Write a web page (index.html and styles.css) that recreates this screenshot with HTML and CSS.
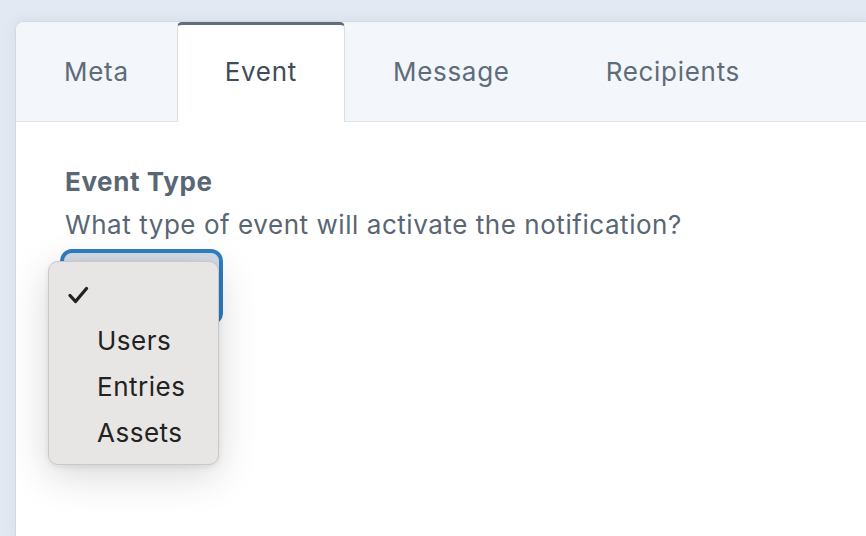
FILE: index.html
```html
<!DOCTYPE html>
<html>
<head>
<meta charset="utf-8">
<link rel="stylesheet" href="styles.css">
</head>
<body>
<div class="card">
  <div class="tabs">
    <div class="tab">Meta</div>
    <div class="tab active">Event</div>
    <div class="tab">Message</div>
    <div class="tab">Recipients</div>
  </div>
  <div class="content">
    <div class="label">Event Type</div>
    <div class="help">What type of event will activate the notification?</div>
    <div class="select-wrap">
      <div class="select"></div>
      <div class="menu">
        <div class="opt checked"><svg class="check" width="22" height="18" viewBox="0 0 22 18"><path d="M3 9.5 L8.5 15.5 L19.5 2.5" fill="none" stroke="#222" stroke-width="3.3" stroke-linecap="round" stroke-linejoin="round"/></svg></div>
        <div class="opt">Users</div>
        <div class="opt">Entries</div>
        <div class="opt">Assets</div>
      </div>
    </div>
  </div>
</div>
</body>
</html>
```
FILE: styles.css
```css
html, body {
  margin: 0;
  padding: 0;
  background: #e3e9f3;
  width: 866px;
  height: 536px;
  overflow: hidden;
  font-family: "Inter", "Noto Sans", sans-serif;
}
body {
  padding: 21px 0 0 15px;
  box-sizing: border-box;
}
.card {
  background: #ffffff;
  border: 1px solid #d1d9e3;
  border-right: none;
  border-bottom: none;
  border-top-left-radius: 9px;
  width: 851px;
  height: 515px;
  overflow: hidden;
  box-shadow: 0 0 12px rgba(150, 165, 190, 0.2);
}
.tabs {
  display: flex;
  height: 99px;
  background: #f3f6fb;
  border-bottom: 1px solid #dde3ea;
}
.tab {
  padding: 0 48px;
  display: flex;
  align-items: center;
  font-size: 26px;
  color: #5f6c7a;
  letter-spacing: 0.7px;
}
.tab.active {
  background: #ffffff;
  color: #3f4c59;
  border-top: 3px solid #606d7b;
  border-left: 1px solid #d8dfe8;
  border-right: 1px solid #d8dfe8;
  border-radius: 5px 5px 0 0;
  margin-bottom: -1px;
  padding: 0 47px 4px 47px;
  height: 100px;
  box-sizing: border-box;
}
.content {
  padding: 43px 49px;
}
.label {
  font-size: 26px;
  font-weight: 700;
  color: #596673;
  line-height: 34px;
  letter-spacing: 0.6px;
}
.help {
  font-size: 26px;
  color: #596673;
  line-height: 34px;
  margin-top: 9px;
  letter-spacing: 0.55px;
}
.select-wrap {
  position: relative;
  margin-top: 7px;
  margin-left: -5px;
}
.select {
  width: 155px;
  height: 68px;
  background: #d3dbe6;
  border: 4px solid #2f7dc0;
  border-radius: 12px;
}
.menu {
  position: absolute;
  left: -12px;
  top: 12px;
  width: 171px;
  background: #e7e6e4;
  border: 1px solid #c9c8c6;
  border-radius: 10px;
  box-sizing: border-box;
  padding: 10px 0 8px;
  box-shadow: 0 10px 40px rgba(0, 0, 0, 0.16), 0 2px 6px rgba(0, 0, 0, 0.08);
}
.opt {
  height: 46px;
  line-height: 46px;
  padding-left: 48px;
  font-size: 26px;
  color: #222222;
  position: relative;
  letter-spacing: 0.5px;
}
.check {
  position: absolute;
  left: 18px;
  top: 14px;
}
```
